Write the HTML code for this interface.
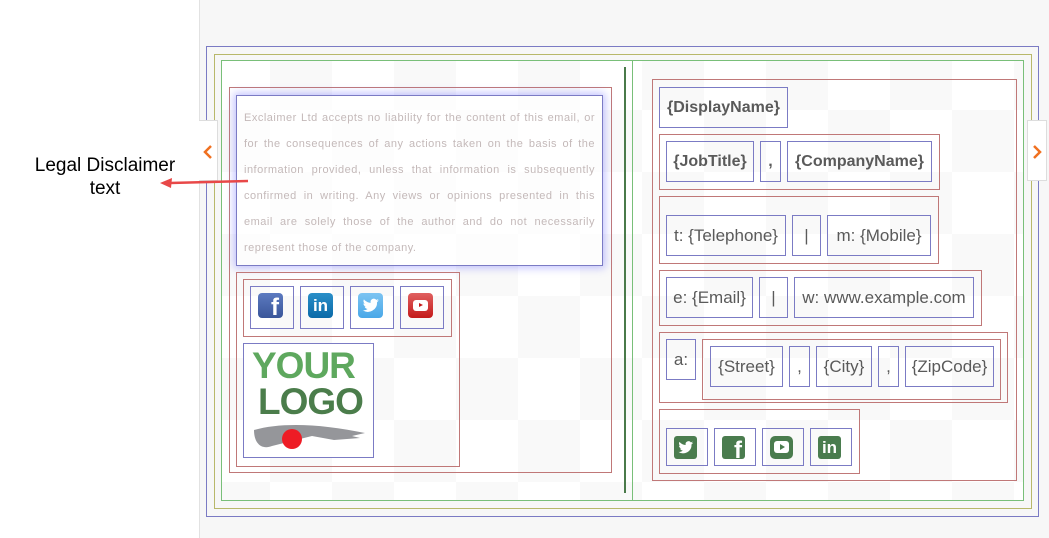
<!DOCTYPE html>
<html><head><meta charset="utf-8"><style>
*{margin:0;padding:0;box-sizing:border-box}
body{width:1049px;height:538px;overflow:hidden;background:#fff;font-family:"Liberation Sans",sans-serif;position:relative}
.a{position:absolute}
.b{position:absolute;border:1px solid #7b7bc4}
.r{position:absolute;border:1px solid #c07878}
.t{position:absolute;border:1px solid #7b7bc4;color:#5a5a5a;font-size:17px;display:flex;align-items:center;justify-content:center;white-space:nowrap}
.t.w{font-weight:bold;font-size:16px}
</style></head><body>
<div class="a" style="left:199px;top:0;width:850px;height:538px;background:#f7f7f7;border-left:1px solid #e2e2e2"></div>
<div class="a" style="left:221px;top:60px;width:803px;height:441px;background-color:#fff;background-image:conic-gradient(#f9f9f9 25%,transparent 0 50%,#f9f9f9 0 75%,transparent 0);background-size:124px 124px;background-position:49px 50px"></div>
<div class="a" style="left:206px;top:46px;width:833px;height:471px;border:1px solid #7b7bc4"></div>
<div class="a" style="left:214px;top:54px;width:818px;height:455px;border:1px solid #b8b86a"></div>
<div class="a" style="left:221px;top:60px;width:803px;height:441px;border:1px solid #79bf79"></div>
<div class="a" style="left:632px;top:60px;width:1px;height:441px;background:#79bf79"></div>
<div class="a" style="left:624px;top:67px;width:2px;height:426px;background:#4a7a4a"></div>
<!-- left -->
<div class="r" style="left:229px;top:87px;width:383px;height:386px"></div>
<div class="b" style="left:236px;top:95px;width:367px;height:171px;background:rgba(255,255,255,.6);box-shadow:0 0 8px 2px rgba(120,120,255,.45);padding:9px 7px 0 7px;color:#c4b9b9;font-size:11px;line-height:26px;text-align:justify;letter-spacing:.5px">Exclaimer Ltd accepts no liability for the content of this email, or for the consequences of any actions taken on the basis of the information provided, unless that information is subsequently confirmed in writing. Any views or opinions presented in this email are solely those of the author and do not necessarily represent those of the company.</div>
<div class="r" style="left:236px;top:272px;width:224px;height:195px"></div>
<div class="r" style="left:243px;top:279px;width:209px;height:58px"></div>
<div class="b" style="left:250px;top:286px;width:44px;height:43px"><div class="a" style="left:7px;top:6px;width:25px;height:25px;border-radius:4px;background:linear-gradient(#5c7ac0,#3a569a);color:#fff;font:bold 24px 'Liberation Sans';text-align:right;padding-right:4px;line-height:30px;overflow:hidden">f</div></div>
<div class="b" style="left:300px;top:286px;width:44px;height:43px"><div class="a" style="left:7px;top:6px;width:25px;height:25px;border-radius:4px;background:linear-gradient(#2a8fc8,#0b6aa8);color:#fff;font:bold 17px 'Liberation Sans';text-align:center;line-height:25px">in</div></div>
<div class="b" style="left:350px;top:286px;width:44px;height:43px"><div class="a" style="left:7px;top:6px;width:25px;height:25px;border-radius:4px;background:linear-gradient(#7cc4f2,#4aa8e8)"><svg width="25" height="25" viewBox="0 0 24 24"><path fill="#fff" d="M20 7c-.6.3-1.2.4-1.8.5.7-.4 1.1-1 1.4-1.7-.6.4-1.3.6-2 .8a3.1 3.1 0 0 0-5.4 2.8C9.600 9.300 7.300 8 5.700 6.100c-.9 1.500-.4 3.300.9 4.200-.5 0-1-.2-1.400-.4 0 1.500 1.100 2.800 2.500 3.100-.5.100-1 .2-1.400.1.400 1.300 1.600 2.100 2.900 2.200A6.300 6.300 0 0 1 4.500 16.600 8.900 8.900 0 0 0 18.300 8.700c.7-.4 1.200-1 1.700-1.700z"/></svg></div></div>
<div class="b" style="left:400px;top:286px;width:44px;height:43px"><div class="a" style="left:7px;top:6px;width:25px;height:25px;border-radius:4px;background:linear-gradient(#e06060,#c41a1a)"><div class="a" style="left:5px;top:7px;width:15px;height:11px;background:#fff;border-radius:3px"></div><div class="a" style="left:11px;top:10px;border-left:4px solid #c41a1a;border-top:2.5px solid transparent;border-bottom:2.5px solid transparent"></div></div></div>
<div class="b" style="left:243px;top:343px;width:131px;height:115px;background:#fff">
<div class="a" style="left:8px;top:2px;font:bold 37px 'Liberation Sans';color:#5ea85e;letter-spacing:-1px;line-height:40px">YOUR</div>
<div class="a" style="left:14px;top:38px;font:bold 37px 'Liberation Sans';color:#4b7d4b;letter-spacing:-1px;line-height:40px">LOGO</div>
<svg class="a" style="left:8px;top:78px" width="120" height="30" viewBox="0 0 120 30"><path fill="#95969a" d="M2 8 C30 0 70 2 113 11 L100 14 L108 16 L82 18 L60 14 L20 24 C10 28 2 22 2 8Z"/><circle cx="40" cy="17" r="10" fill="#ee1c25"/></svg>
</div>
<!-- tabs -->
<div class="a" style="left:199px;top:120px;width:19px;height:61px;background:#fff;border:1px solid #ddd;border-left:none"><svg class="a" style="left:4px;top:24px" width="10" height="14"><path d="M8 1 L2 7 L8 13" fill="none" stroke="#f07020" stroke-width="2.5"/></svg></div>
<div class="a" style="left:1027px;top:120px;width:20px;height:61px;background:#fff;border:1px solid #ddd"><svg class="a" style="left:4px;top:24px" width="10" height="14"><path d="M2 1 L8 7 L2 13" fill="none" stroke="#f07020" stroke-width="2.5"/></svg></div>
<div class="a" style="left:15px;top:154px;width:180px;text-align:center;font-size:19px;line-height:23px;color:#000">Legal Disclaimer<br>text</div>
<svg class="a" style="left:158px;top:174px" width="92" height="16"><path d="M90 7 L12 9" stroke="#e84848" stroke-width="2.5"/><path d="M2 9 L14 4 L13 14Z" fill="#e84848"/></svg>
<!-- right -->
<div class="r" style="left:652px;top:79px;width:365px;height:402px"></div>
<div class="t w" style="left:659px;top:87px;width:129px;height:41px">{DisplayName}</div>
<div class="r" style="left:659px;top:134px;width:281px;height:56px"></div>
<div class="t w" style="left:666px;top:141px;width:88px;height:41px">{JobTitle}</div>
<div class="t w" style="left:760px;top:141px;width:21px;height:41px">,</div>
<div class="t w" style="left:787px;top:141px;width:145px;height:41px">{CompanyName}</div>
<div class="r" style="left:659px;top:196px;width:280px;height:68px"></div>
<div class="t" style="left:666px;top:215px;width:120px;height:41px">t: {Telephone}</div>
<div class="t" style="left:792px;top:215px;width:29px;height:41px">|</div>
<div class="t" style="left:827px;top:215px;width:104px;height:41px">m: {Mobile}</div>
<div class="r" style="left:659px;top:270px;width:323px;height:56px"></div>
<div class="t" style="left:666px;top:277px;width:87px;height:41px">e: {Email}</div>
<div class="t" style="left:759px;top:277px;width:29px;height:41px">|</div>
<div class="t" style="left:794px;top:277px;width:180px;height:41px">w: www.example.com</div>
<div class="r" style="left:659px;top:332px;width:349px;height:71px"></div>
<div class="t" style="left:666px;top:339px;width:30px;height:41px">a:</div>
<div class="r" style="left:702px;top:339px;width:299px;height:61px"></div>
<div class="t" style="left:710px;top:346px;width:73px;height:41px">{Street}</div>
<div class="t" style="left:789px;top:346px;width:21px;height:41px">,</div>
<div class="t" style="left:816px;top:346px;width:56px;height:41px">{City}</div>
<div class="t" style="left:878px;top:346px;width:21px;height:41px">,</div>
<div class="t" style="left:905px;top:346px;width:89px;height:41px">{ZipCode}</div>
<div class="r" style="left:659px;top:409px;width:201px;height:65px"></div>
<div class="b" style="left:666px;top:428px;width:42px;height:38px"><div class="a" style="left:7px;top:7px;width:23px;height:23px;border-radius:3px;background:#4a7c4e"><svg width="23" height="23" viewBox="0 0 24 24"><path fill="#fff" d="M20 7c-.6.3-1.2.4-1.8.5.7-.4 1.1-1 1.4-1.7-.6.4-1.3.6-2 .8a3.1 3.1 0 0 0-5.4 2.8C9.600 9.300 7.300 8 5.700 6.100c-.9 1.500-.4 3.300.9 4.200-.5 0-1-.2-1.400-.4 0 1.500 1.100 2.800 2.500 3.100-.5.100-1 .2-1.400.1.400 1.300 1.600 2.100 2.900 2.200A6.300 6.300 0 0 1 4.500 16.600 8.900 8.900 0 0 0 18.300 8.700c.7-.4 1.200-1 1.700-1.700z"/></svg></div></div>
<div class="b" style="left:714px;top:428px;width:42px;height:38px"><div class="a" style="left:7px;top:7px;width:23px;height:23px;border-radius:3px;background:#4a7c4e;color:#fff;font:bold 24px 'Liberation Sans';text-align:right;padding-right:3px;line-height:29px;overflow:hidden">f</div></div>
<div class="b" style="left:762px;top:428px;width:42px;height:38px"><div class="a" style="left:7px;top:7px;width:23px;height:23px;border-radius:5px;background:#4a7c4e"><div class="a" style="left:4px;top:5px;width:15px;height:12px;background:#fff;border-radius:3px"></div><div class="a" style="left:10px;top:8px;border-left:5px solid #4a7c4e;border-top:3px solid transparent;border-bottom:3px solid transparent"></div></div></div>
<div class="b" style="left:810px;top:428px;width:42px;height:38px"><div class="a" style="left:7px;top:7px;width:23px;height:23px;border-radius:3px;background:#4a7c4e;color:#fff;font:bold 17px 'Liberation Sans';text-align:center;line-height:24px">in</div></div>
</body></html>
